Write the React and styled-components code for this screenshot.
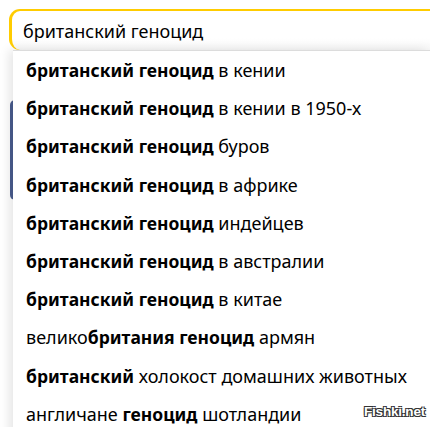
import React from "react";
import styled, { createGlobalStyle } from "styled-components";

const Global = createGlobalStyle`
  html, body { margin: 0; padding: 0; background: #fff; }
  body { font-family: "Noto Sans", "Open Sans", Arial, sans-serif; }
`;

const Page = styled.div`
  position: relative;
  width: 430px;
  height: 427px;
  overflow: hidden;
  background: #fff;
  padding-top: 9px;
  box-sizing: border-box;
`;

const BehindBar = styled.div`
  position: absolute;
  left: 10px;
  top: 100px;
  width: 10px;
  height: 100px;
  border-radius: 5px;
  background: #4a5d8f;
`;

const SearchBox = styled.div`
  position: relative;
  z-index: 2;
  margin-left: 9px;
  width: 440px;
  height: 41px;
  box-sizing: border-box;
  border-top: 2px solid #ffcc00;
  border-left: 3px solid #ffcc00;
  border-radius: 11px 0 0 11px;
  background: linear-gradient(#fff 70%, #f7f7f7);
  display: flex;
  align-items: center;
  padding-left: 11px;
  padding-top: 1px;
  font-size: 18px;
  color: #000;
`;

const Dropdown = styled.ul`
  position: relative;
  z-index: 3;
  list-style: none;
  margin: 0 0 0 13px;
  padding: 0;
  background: #fff;
  border-top: 1px solid #dcdcdc;
  box-shadow: -4px 0 10px rgba(0, 0, 0, 0.1);
  height: 400px;
`;

const Item = styled.li`
  height: 38.2px;
  display: flex;
  align-items: center;
  padding-left: 13px;
  font-size: 18px;
  color: #000;
`;

const Text = styled.span`
  white-space: pre;
`;

const B = styled.b`
  font-weight: 700;
  font-size: 17.5px;
`;

const Watermark = styled.div`
  position: absolute;
  right: 5px;
  bottom: 8px;
  z-index: 5;
  font-family: "Liberation Sans", Arial, sans-serif;
  font-weight: 700;
  font-size: 13.5px;
  color: #fff;
  letter-spacing: -0.2px;
  text-shadow: -1px -1px 0 #333, 1px -1px 0 #333, -1px 1px 0 #333, 1px 1px 0 #333;
`;

const items = [
  [["британский геноцид", true], [" в кении", false]],
  [["британский геноцид", true], [" в кении в 1950-х", false]],
  [["британский геноцид", true], [" буров", false]],
  [["британский геноцид", true], [" в африке", false]],
  [["британский геноцид", true], [" индейцев", false]],
  [["британский геноцид", true], [" в австралии", false]],
  [["британский геноцид", true], [" в китае", false]],
  [["велико", false], ["британия геноцид", true], [" армян", false]],
  [["британский", true], [" холокост домашних животных", false]],
  [["англичане ", false], ["геноцид", true], [" шотландии", false]],
];

export default function App() {
  return (
    <>
      <Global />
      <Page>
        <BehindBar />
        <SearchBox>британский геноцид</SearchBox>
        <Dropdown>
          {items.map((parts, i) => (
            <Item key={i}>
              <Text>
                {parts.map(([t, b], j) => (b ? <B key={j}>{t}</B> : <React.Fragment key={j}>{t}</React.Fragment>))}
              </Text>
            </Item>
          ))}
        </Dropdown>
        <Watermark>Fishki.net</Watermark>
      </Page>
    </>
  );
}
